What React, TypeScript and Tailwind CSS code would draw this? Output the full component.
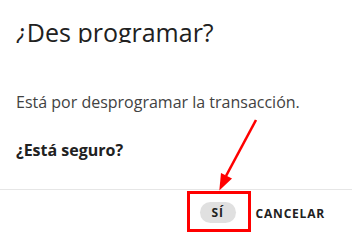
import React from "react";

export default function App() {
  return (
    <div
      className="relative w-[352px] h-[239px] bg-white overflow-hidden flex flex-col"
      style={{ fontFamily: '"Open Sans", sans-serif' }}
    >
      <div className="h-[43px] shrink-0 overflow-hidden pl-4 pt-4">
        <h2 className="text-[25px] leading-[32px] text-[#212121] font-normal whitespace-nowrap">¿Des programar?</h2>
      </div>
      <div className="pl-4 pt-[47px] h-[146px] shrink-0">
        <p className="text-[16px] leading-[24px] text-[#424242]">Está por desprogramar la transacción.</p>
        <p className="mt-6 text-[16px] leading-[24px] font-bold text-[#212121]">¿Está seguro?</p>
      </div>
      <div className="flex-1 border-t border-[#e6e6e6] flex justify-end items-start pr-[19px] pt-3">
        <button className="w-[36px] h-[21px] rounded-full bg-[#e0e0e0] text-[12px] font-bold tracking-[0.8px] text-[#212121] flex items-center justify-center">
          SÍ
        </button>
        <button className="ml-3 px-2 h-[21px] text-[12px] font-bold tracking-[0.8px] text-[#212121] flex items-center pt-[2px]">
          CANCELAR
        </button>
      </div>
      <div className="absolute left-[187px] top-[191px] w-[64px] h-[41px] border-[3px] border-[#ff0000]" />
      <svg className="absolute left-0 top-0" width="352" height="239" viewBox="0 0 352 239">
        <line x1="256" y1="120" x2="226" y2="176" stroke="#ff0000" strokeWidth="2.6" />
        <polygon points="219.3,190.5 221,173 232,178.6" fill="#ff0000" />
      </svg>
    </div>
  );
}
